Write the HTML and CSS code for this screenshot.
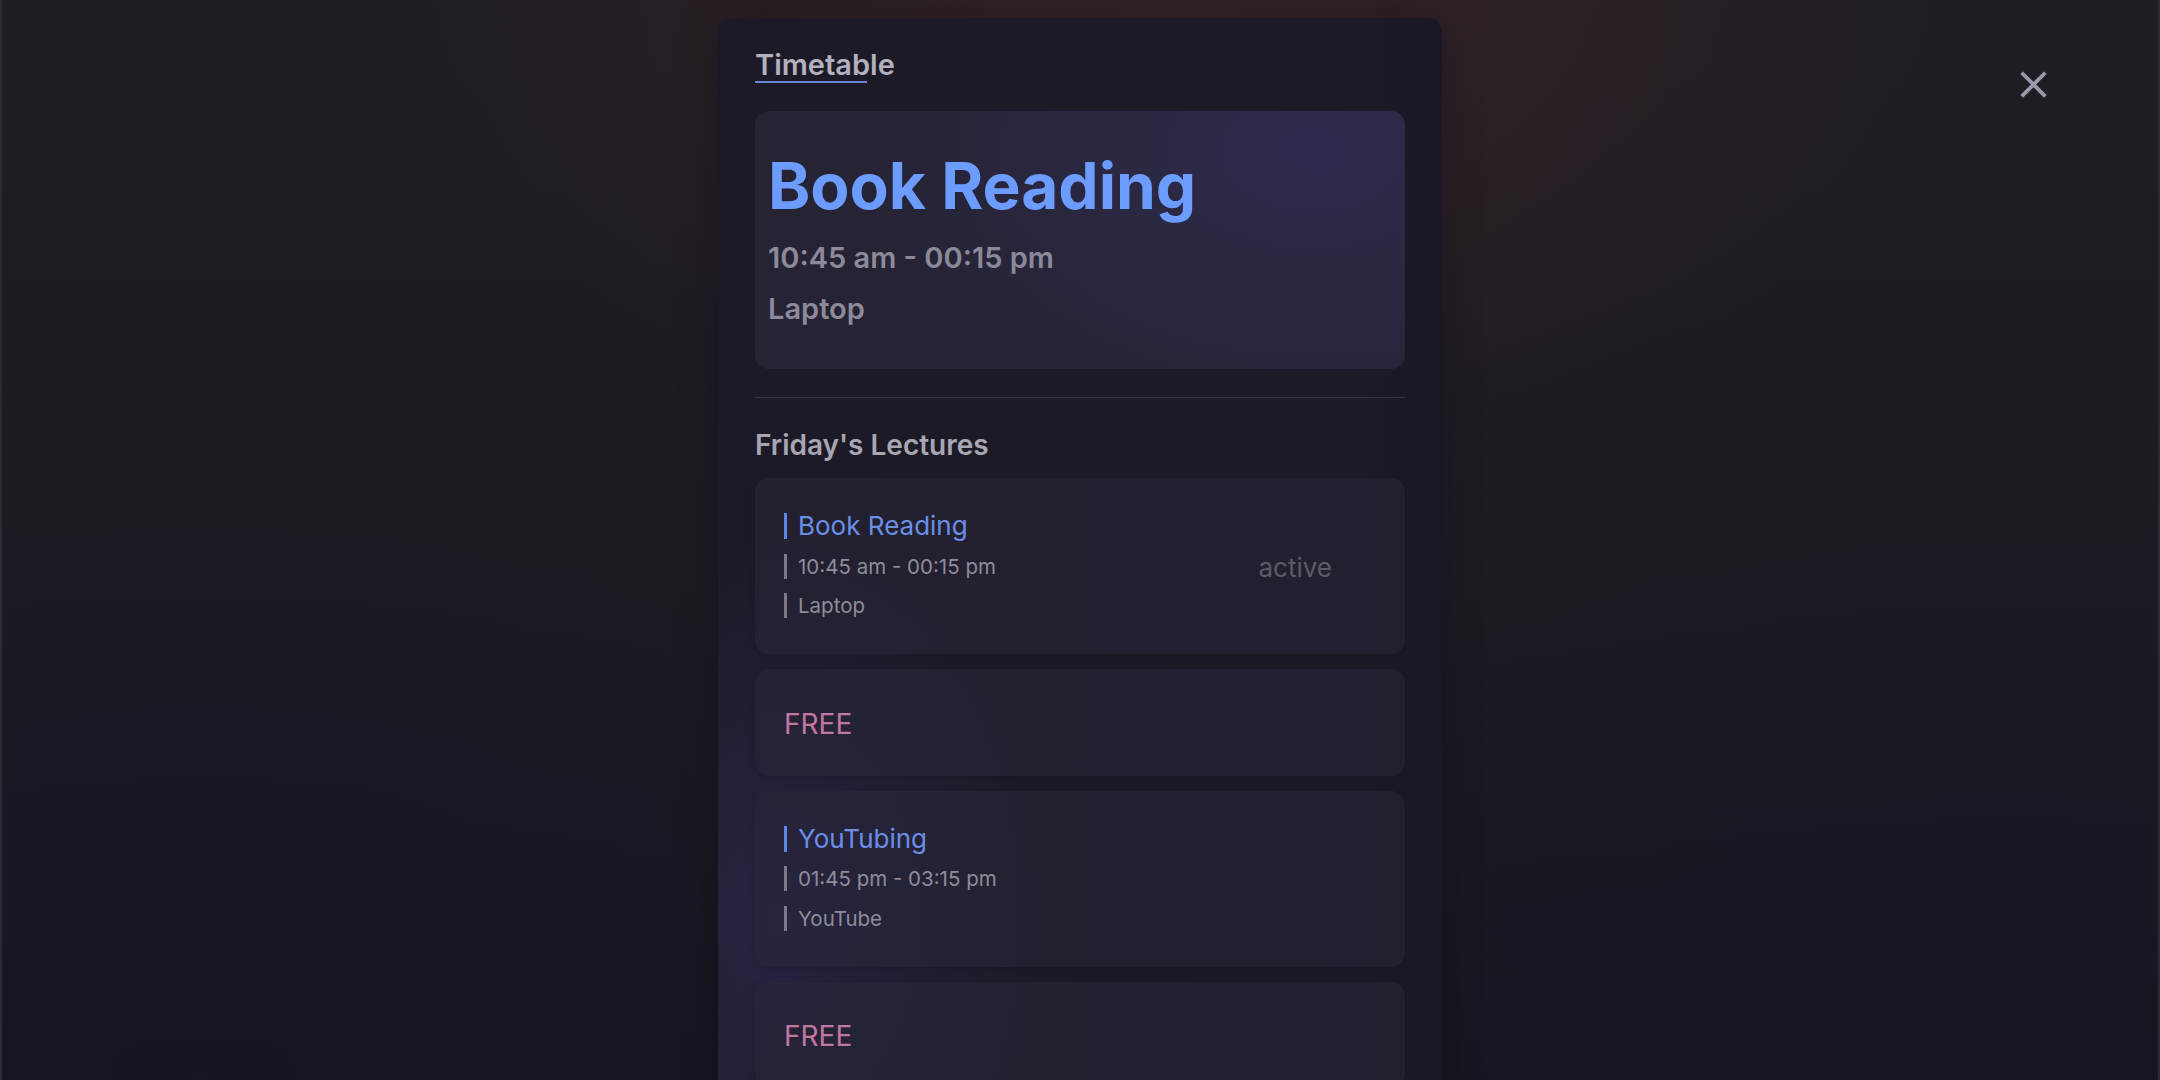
FILE: index.html
```html
<!DOCTYPE html>
<html lang="en">
<head>
<meta charset="utf-8">
<title>Timetable</title>
<link rel="stylesheet" href="styles.css">
</head>
<body>
<div class="screen">
  <button class="close" aria-label="Close">
    <svg viewBox="0 0 24 24" width="45" height="45"><path d="M19 6.41L17.59 5 12 10.59 6.41 5 5 6.41 10.59 12 5 17.59 6.41 19 12 13.41 17.59 19 19 17.59 13.41 12z"/></svg>
  </button>
  <main class="panel">
    <h2 class="panel-title">Timetable</h2>
    <section class="now">
      <h1 class="now-title">Book Reading</h1>
      <p class="now-time">10:45 am - 00:15 pm</p>
      <p class="now-place">Laptop</p>
    </section>
    <hr class="divider">
    <h3 class="day-title">Friday's Lectures</h3>
    <ul class="lectures">
      <li class="lecture">
        <div class="lecture-info">
          <span class="row row-title">Book Reading</span>
          <span class="row">10:45 am - 00:15 pm</span>
          <span class="row">Laptop</span>
        </div>
        <span class="status">active</span>
      </li>
      <li class="lecture free">FREE</li>
      <li class="lecture">
        <div class="lecture-info">
          <span class="row row-title">YouTubing</span>
          <span class="row">01:45 pm - 03:15 pm</span>
          <span class="row">YouTube</span>
        </div>
      </li>
      <li class="lecture free">FREE</li>
    </ul>
  </main>
</div>
</body>
</html>
```

FILE: styles.css
```css
* { box-sizing: border-box; }

html, body {
  margin: 0;
  padding: 0;
  width: 2160px;
  height: 1080px;
  overflow: hidden;
  background: #1d1a22;
  font-family: Inter, "Noto Sans", "Liberation Sans", sans-serif;
}

.screen {
  position: relative;
  width: 2160px;
  height: 1080px;
  overflow: hidden;
  display: flex;
  justify-content: center;
  align-items: flex-start;
  padding-top: 18px;
  border-left: 2px solid #2c2b33;
  border-right: 2px solid #2c2b33;
  background:
    radial-gradient(ellipse 760px 460px at 1180px 0px, rgba(62, 40, 44, 0.55), rgba(62, 40, 44, 0) 100%),
    radial-gradient(ellipse 900px 600px at 200px 1080px, rgba(20, 20, 36, 0.7), rgba(20, 20, 36, 0) 100%),
    radial-gradient(ellipse 900px 600px at 2000px 1080px, rgba(20, 20, 34, 0.6), rgba(20, 20, 34, 0) 100%),
    linear-gradient(to bottom, #221d25 0%, #1f1b23 50%, #18161f 100%);
}

.close {
  position: absolute;
  top: 62px;
  right: 102px;
  width: 45px;
  height: 45px;
  padding: 0;
  border: 0;
  background: none;
  fill: #9a98aa;
}

.close svg { display: block; }

.panel {
  width: 724px;
  min-height: 1200px;
  flex-shrink: 0;
  padding: 29px 37px 0;
  border-radius: 14px 14px 0 0;
  display: flex;
  flex-direction: column;
  align-items: flex-start;
  background:
    radial-gradient(ellipse 260px 380px at 60px 900px, rgba(58, 54, 120, 0.35), rgba(58, 54, 120, 0) 100%),
    linear-gradient(to right, #1d1a27 0%, #1c1a26 90%, #191722 100%);
  box-shadow: 0 0 40px rgba(0, 0, 0, 0.25);
}

.panel-title {
  margin: 0 0 28px;
  font-size: 29px;
  line-height: 36px;
  font-weight: 600;
  color: #b3b1bf;
  background: linear-gradient(#6a86d8, #6a86d8) no-repeat left bottom / 80% 2.5px;
}

.now {
  width: 650px;
  height: 258px;
  padding: 36px 13px 0;
  border-radius: 14px;
  background:
    radial-gradient(ellipse 460px 300px at 560px 40px, rgba(64, 58, 120, 0.38), rgba(64, 58, 120, 0) 100%),
    #252334;
}

.now-title {
  margin: 0;
  font-size: 64px;
  line-height: 78px;
  font-weight: 700;
  color: #6c9cff;
}

.now-time,
.now-place {
  margin: 15px 0 0;
  font-size: 29px;
  line-height: 35px;
  font-weight: 600;
  color: #8c8a9a;
}

.now-place { margin-top: 16px; }

.divider {
  width: 650px;
  margin: 28px 0 0;
  border: 0;
  border-top: 1px solid #36343f;
}

.day-title {
  margin: 30px 0 16px;
  font-size: 28px;
  line-height: 34px;
  font-weight: 600;
  color: #a8a6b3;
}

.lectures {
  list-style: none;
  margin: 0;
  padding: 0;
  width: 650px;
  display: flex;
  flex-direction: column;
  gap: 15px;
}

.lecture {
  display: flex;
  align-items: center;
  justify-content: space-between;
  padding: 35px 29px 36px;
  border-radius: 14px;
  background: rgba(40, 38, 56, 0.55);
  box-shadow: 0 2px 10px rgba(0, 0, 0, 0.12);
}

.lecture-info {
  display: flex;
  flex-direction: column;
  gap: 14.5px;
}

.row {
  display: block;
  padding-left: 11px;
  border-left: 3px solid #7c7a88;
  font-size: 20.5px;
  line-height: 25px;
  color: #8e8c9b;
}

.row-title {
  font-size: 26px;
  line-height: 26px;
  color: #6b8fe6;
  border-left-color: #5f86e2;
}

.status {
  margin: 4px 44px 0 0;
  font-size: 26px;
  line-height: 32px;
  color: #5d5b69;
}

.free {
  padding: 37.5px 29px 35px;
  font-size: 28px;
  line-height: 34px;
  color: #c2779e;
}
```
